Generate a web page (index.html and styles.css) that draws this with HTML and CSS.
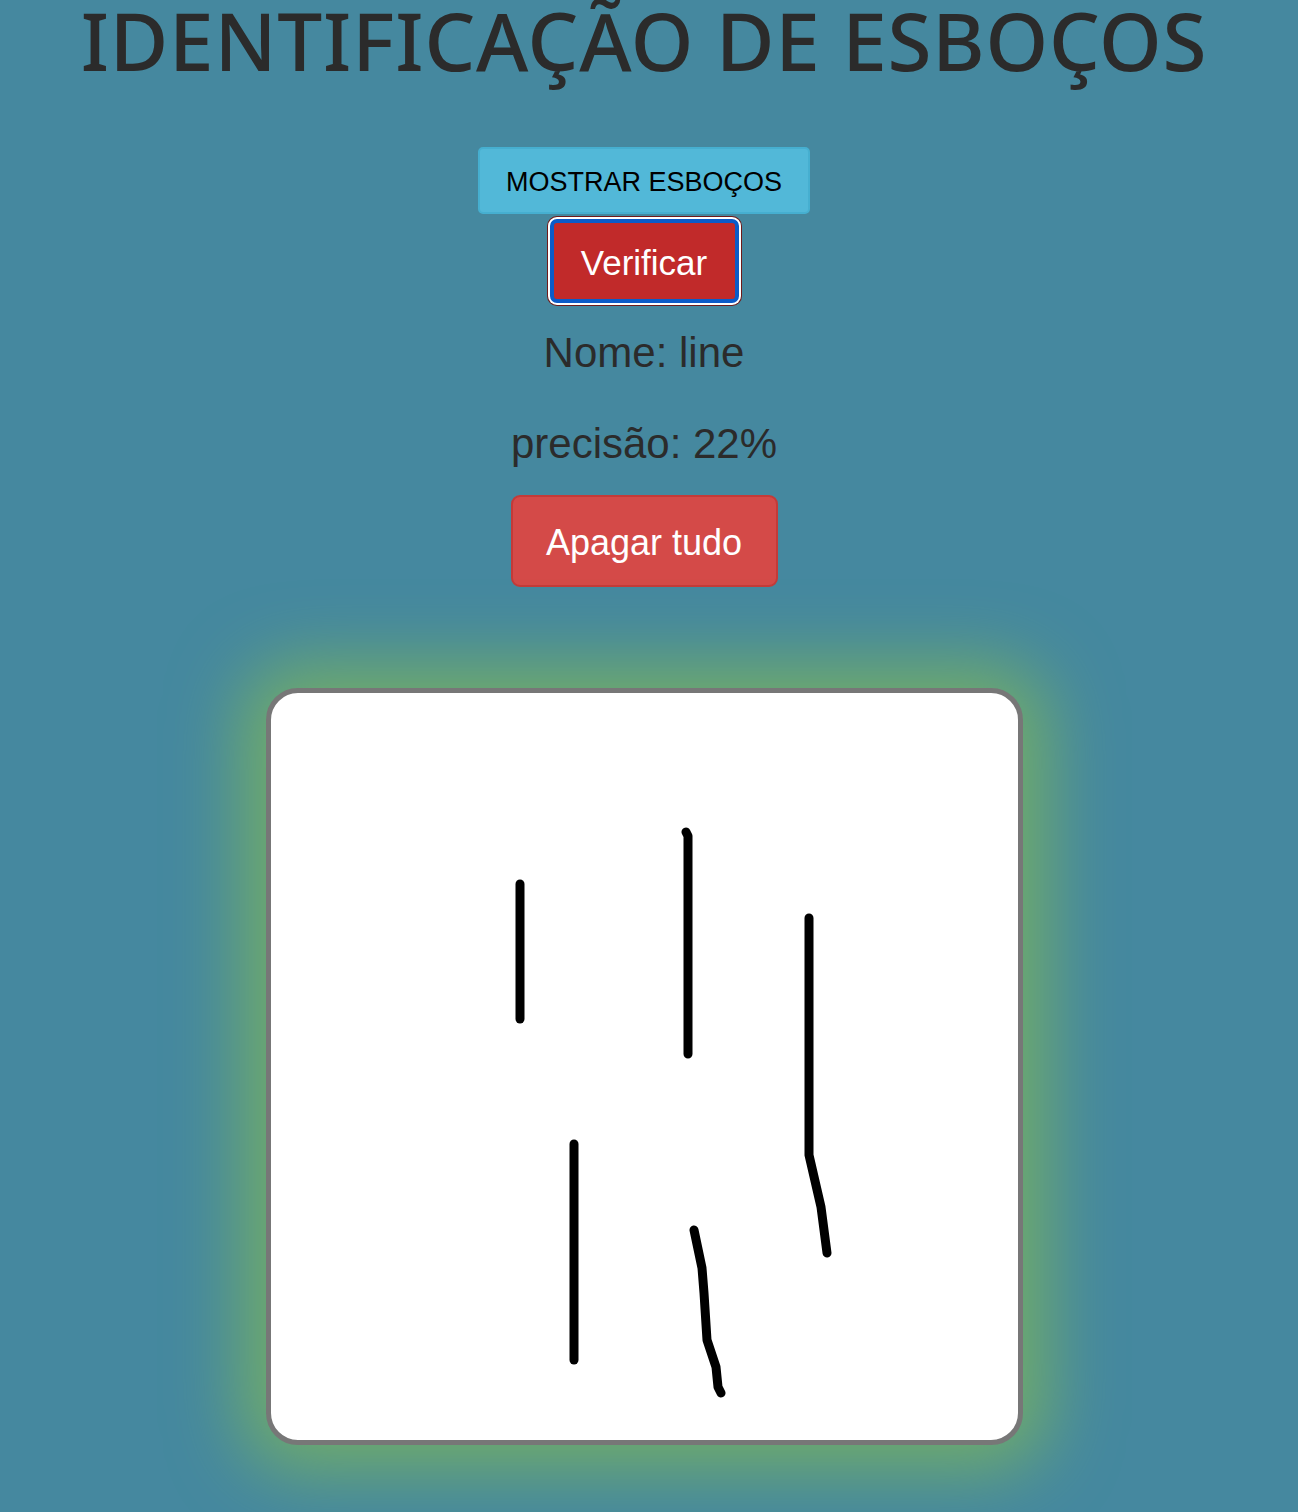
FILE: index.html
```html
<!DOCTYPE html>
<html lang="pt">
<head>
<meta charset="utf-8">
<title>Identificação de esboços</title>
<link rel="stylesheet" href="styles.css">
</head>
<body>
<main class="page">
  <h1 class="title">IDENTIFICAÇÃO DE ESBOÇOS</h1>
  <button class="btn btn-info">MOSTRAR ESBOÇOS</button>
  <button class="btn btn-verify">Verificar</button>
  <p class="result result-name">Nome: line</p>
  <p class="result result-prec">precisão: 22%</p>
  <button class="btn btn-clear">Apagar tudo</button>
  <div class="canvas">
    <svg class="drawing" width="747" height="747" viewBox="0 0 747 747">
      <g fill="none" stroke="#000" stroke-width="9" stroke-linecap="round" stroke-linejoin="round">
        <polyline points="249,191 249,326"/>
        <polyline points="415,139 417,143 417,361"/>
        <polyline points="538,225 538,462 550,514 556,560"/>
        <polyline points="303,451 303,667"/>
        <polyline points="423,537 431,575 433,600 436,647 445,674 447,694 450,700"/>
      </g>
    </svg>
  </div>
</main>
</body>
</html>
```
FILE: styles.css
```css
html, body {
  margin: 0;
  padding: 0;
}
body {
  background: #45889f;
  font-family: "Liberation Sans", Arial, sans-serif;
  color: #2b2b2b;
  min-height: 1512px;
}
.page {
  display: flex;
  flex-direction: column;
  align-items: center;
  width: 1288px;
}
.title {
  margin: 0;
  height: 147px;
  font-family: "Noto Sans", sans-serif;
  font-weight: 500;
  font-size: 80px;
  line-height: 80px;
  letter-spacing: 0.8px;
  color: #2b2b2b;
  white-space: nowrap;
}
.btn {
  font-family: "Liberation Sans", Arial, sans-serif;
  cursor: pointer;
  padding: 3px 0 0;
}
.btn-info {
  width: 332px;
  height: 67px;
  background: #52b8d8;
  border: 2px solid #46afd0;
  border-radius: 5px;
  color: #000;
  font-size: 27px;
}
.btn-verify {
  margin-top: 5px;
  width: 189px;
  height: 84px;
  background: #c12a2a;
  border: 4px solid #0b5bc8;
  border-radius: 7px;
  box-shadow: 0 0 0 2px #fff, 0 0 0 3px #6e1a1a;
  color: #fff;
  font-size: 35px;
}
.result {
  margin: 0;
  font-size: 42px;
  line-height: 48px;
  color: #2b2b2b;
}
.result-name {
  margin-top: 26px;
}
.result-prec {
  margin-top: 43px;
}
.btn-clear {
  margin-top: 27px;
  width: 267px;
  height: 92px;
  background: #d44a48;
  border: 2px solid #c43a38;
  border-radius: 9px;
  color: #fff;
  font-size: 36px;
}
.canvas {
  margin-top: 101px;
  width: 747px;
  height: 747px;
  background: #fff;
  border: 5px solid #777;
  border-radius: 32px;
  box-shadow: 0 0 70px 25px #72ad69;
  overflow: hidden;
}
.drawing {
  display: block;
}
```
